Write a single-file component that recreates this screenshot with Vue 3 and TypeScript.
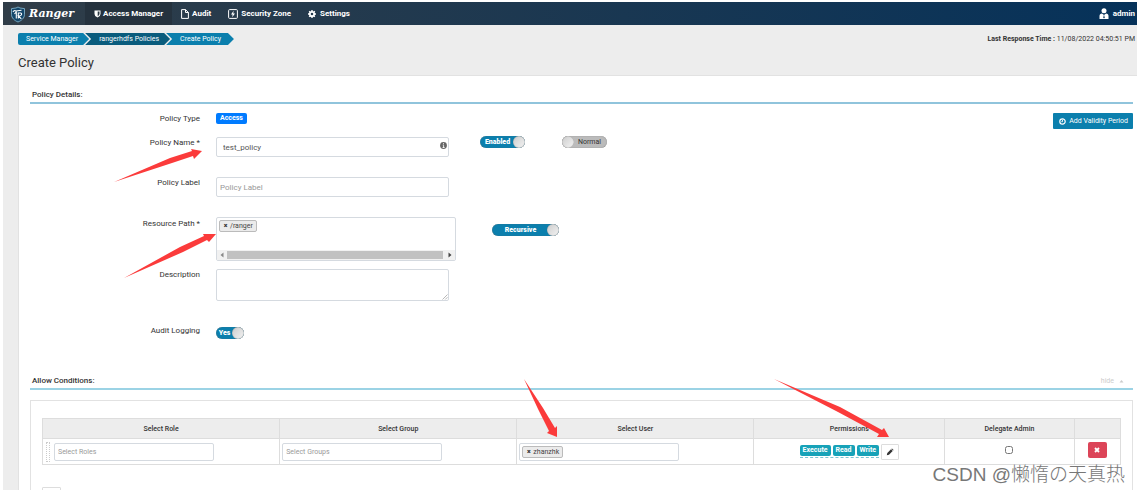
<script setup lang="ts">
import { ref } from 'vue'

interface Permission { name: string }

const policyName = ref('test_policy')
const policyLabel = ref('')
const description = ref('')
const enabled = ref(true)
const normal = ref(false)
const recursive = ref(true)
const audit = ref(true)
const delegateAdmin = ref(false)
const permissions: Permission[] = [{ name: 'Execute' }, { name: 'Read' }, { name: 'Write' }]
const arrows: string[] = [
  '114,182 170,158 192,151 191,149 202,151 194,159 193,156 172,163',
  '124,278 180,247 204,236 203,234 216,234 209,242 207,240 183,252',
  '524,379 543,408 555,428 557,426 557,437 547,433 549,431 538,409',
  '774,379 840,407 882,430 884,428 889,437 877,437 879,434 838,412',
]
</script>

<template>
  <div class="page">
    <header class="topbar">
      <a class="brand" href="#">
        <svg width="16" height="17" viewBox="0 0 16 17" aria-hidden="true">
          <path d="M8 1 10 2 14.500 2.600V8.500C14.500 12 11.500 14.600 8 16 4.500 14.600 1.500 12 1.500 8.500V2.600L6 2Z" fill="#14476b" stroke="#7fb0c8" stroke-width=".9" />
          <path d="M3 6Q4 4 6 5L11.500 4.200M4.500 8 6.500 5.500M6.300 6v6.500M8.300 12.500V7H10.500Q12 7.200 11.500 8.700T8.500 10L11.300 12.800" fill="none" stroke="#fff" stroke-width="1.100" />
        </svg>
        <span>Ranger</span>
      </a>
      <nav>
        <a class="active" href="#">
          <svg width="7" height="8" viewBox="0 0 7 8" aria-hidden="true"><path d="M.5.5h6v3.500Q6.500 6.500 3.500 7.600.5 6.500.5 4Z" fill="#fff" /><path d="M3.700 1.500H5.500V4Q5.300 5.400 3.700 6.300Z" fill="#273540" /></svg>
          Access Manager
        </a>
        <a href="#">
          <svg width="8" height="10" viewBox="0 0 8 10" aria-hidden="true"><path d="M.6.6H4.500L7.400 3.500V9.400H.6ZM4.500.6V3.500H7.400" fill="none" stroke="#fff" /></svg>
          Audit
        </a>
        <a href="#">
          <svg width="10" height="10" viewBox="0 0 10 10" aria-hidden="true"><rect x=".6" y=".6" width="8.800" height="8.800" rx="1" fill="none" stroke="#fff" /><path d="M5.600 1.800 3 5.500H4.600L4.200 8.300 7 4.500H5.300Z" fill="#fff" /></svg>
          Security Zone
        </a>
        <a href="#" class="settings">
          <svg width="8" height="8" viewBox="0 0 8 8" aria-hidden="true"><circle cx="4" cy="4" r="2.200" fill="none" stroke="#fff" stroke-width="1.800" /><path d="M4 0V1.500M4 6.500V8M0 4H1.500M6.500 4H8M1.200 1.200 2 2M6 6 6.800 6.800M1.200 6.800 2 6M6 2 6.800 1.200" stroke="#fff" stroke-width="1.400" /></svg>
          Settings
        </a>
      </nav>
      <a class="user" href="#">
        <svg width="10" height="11" viewBox="0 0 10 11" aria-hidden="true"><circle cx="5" cy="2.700" r="2.500" fill="#fff" /><path d="M.5 11V8Q.5 5.500 3 5.500L5 7 7 5.500Q9.500 5.500 9.500 8V11Z" fill="#fff" /><path d="M5 6.500 4.300 9.500 5 10.500 5.700 9.500Z" fill="#0a3358" /></svg>
        admin
      </a>
    </header>

    <div class="subbar">
      <nav class="crumbs" aria-label="Breadcrumb">
        <a href="#">Service Manager</a>
        <a href="#" class="dark">rangerhdfs Policies</a>
        <a href="#" class="last">Create Policy</a>
      </nav>
      <p class="time"><b>Last Response Time :</b> 11/08/2022 04:50:51 PM</p>
    </div>
    <h1>Create Policy</h1>

    <main>
      <h2>Policy Details:</h2>
      <form class="details" @submit.prevent>
        <div class="fields">
          <div class="row type"><span class="label">Policy Type</span><span class="access">Access</span></div>
          <div class="row name">
            <label class="label" for="name">Policy Name *</label>
            <div class="box">
              <input id="name" v-model="policyName" type="text">
              <svg class="info" width="7" height="7" viewBox="0 0 7 7" aria-hidden="true"><circle cx="3.500" cy="3.500" r="3.400" fill="#666" /><path d="M3.500 1.200v1.100M2.700 3.200h.9v2.200M2.600 5.500h2" stroke="#fff" stroke-width=".9" /></svg>
            </div>
            <label class="switch enabled"><input v-model="enabled" type="checkbox"><span>Enabled</span></label>
            <label class="switch normal"><input v-model="normal" type="checkbox"><span>Normal</span></label>
          </div>
          <div class="row plabel">
            <label class="label" for="plabel">Policy Label</label>
            <div class="box"><input id="plabel" v-model="policyLabel" type="text" placeholder="Policy Label"></div>
          </div>
          <div class="row resource">
            <span class="label">Resource Path *</span>
            <div class="paths">
              <span class="tag"><button type="button" aria-label="Remove /ranger">×</button>/ranger</span>
              <div class="scroll">
                <svg width="4" height="6" viewBox="0 0 4 6" aria-hidden="true"><path d="M3.500.5v5L.5 3Z" fill="#888" /></svg>
                <i></i>
                <svg width="4" height="6" viewBox="0 0 4 6" aria-hidden="true"><path d="M.5.5v5L3.500 3Z" fill="#444" /></svg>
              </div>
            </div>
            <label class="switch recursive"><input v-model="recursive" type="checkbox"><span>Recursive</span></label>
          </div>
          <div class="row desc">
            <label class="label" for="desc">Description</label>
            <div class="box">
              <textarea id="desc" v-model="description"></textarea>
              <svg class="grab" width="6" height="6" viewBox="0 0 6 6" aria-hidden="true"><path d="M.5 5.500 5.500.5M3.200 5.500 5.500 3.200" stroke="#999" stroke-width=".7" /></svg>
            </div>
          </div>
          <div class="row">
            <span class="label">Audit Logging</span>
            <label class="switch yes"><input v-model="audit" type="checkbox"><span>Yes</span></label>
          </div>
        </div>
        <button class="validity" type="button">
          <svg width="7" height="7" viewBox="0 0 7 7" aria-hidden="true"><circle cx="3.500" cy="3.500" r="2.700" fill="none" stroke="#fff" stroke-width="1.200" /><path d="M3.500 1.800V3.700H2.300" fill="none" stroke="#fff" stroke-width=".9" /></svg>
          Add Validity Period
        </button>
      </form>

      <h2 class="allow">Allow Conditions: <a href="#">hide <svg width="5" height="4" viewBox="0 0 5 4" aria-hidden="true"><path d="M.5 3.500 2.500 1 4.500 3.500Z" fill="#ccc" /></svg></a></h2>
      <section class="conditions">
        <table>
          <colgroup><col class="c1"><col class="c2"><col class="c2"><col class="c4"><col class="c5"><col class="c6"></colgroup>
          <thead>
            <tr><th>Select Role</th><th>Select Group</th><th>Select User</th><th>Permissions</th><th>Delegate Admin</th><th></th></tr>
          </thead>
          <tbody>
            <tr>
              <td><div class="cell"><i class="grip"></i><input type="text" placeholder="Select Roles" aria-label="Select Roles"></div></td>
              <td><div class="cell"><input type="text" placeholder="Select Groups" aria-label="Select Groups"></div></td>
              <td><div class="cell"><div class="users"><span class="tag"><button type="button" aria-label="Remove zhanzhk">×</button>zhanzhk</span></div></div></td>
              <td>
                <div class="perms">
                  <div class="badges"><span v-for="p in permissions" :key="p.name">{{ p.name }}</span></div>
                  <button type="button" aria-label="Edit permissions"><svg width="8" height="8" viewBox="0 0 8 8" aria-hidden="true"><path d="M.8 7.200 1.300 5 5 1.300 6.700 3 3 6.700ZM5.400.9 6 .4 7.600 2 7.100 2.600Z" fill="#333" /></svg></button>
                </div>
              </td>
              <td class="mid"><input v-model="delegateAdmin" type="checkbox" aria-label="Delegate Admin"></td>
              <td class="mid"><button class="remove" type="button" aria-label="Remove row"><svg width="6" height="6" viewBox="0 0 6 6" aria-hidden="true"><path d="M1 1 5 5M5 1 1 5" stroke="#fff" stroke-width="1.800" /></svg></button></td>
            </tr>
          </tbody>
        </table>
        <button class="add" type="button" aria-label="Add row"></button>
      </section>
    </main>

    <svg class="arrows" width="1140" height="494" viewBox="0 0 1140 494" aria-hidden="true">
      <polygon v-for="a in arrows" :key="a" :points="a" fill="#fb3b3b" />
    </svg>
    <div class="watermark">CSDN @懒惰の天真热</div>
  </div>
</template>

<style>
body { margin: 0; background: #fff; }
</style>

<style scoped>
.page { position: relative; height: 100vh; box-sizing: border-box; padding: 2px 3px 4px; overflow: hidden; display: flex; flex-direction: column; font: 8px/12px Roboto, "Liberation Sans", sans-serif; color: #333; background: #ededed content-box; }
.page *, .page *::before { box-sizing: border-box; }
a { color: inherit; text-decoration: none; }
svg { display: block; flex: none; }
button { font: inherit; cursor: pointer; }
h1, h2, p { margin: 0; }
input, textarea { font: inherit; color: #555; }
::placeholder { color: #999; opacity: 1; }

.topbar { flex: none; height: 23px; display: flex; align-items: stretch; color: #fff; font-weight: 700; background: linear-gradient(90deg, #303d48, #06325a); }
.brand { width: 82px; padding: 1px 0 0 7px; display: flex; align-items: center; gap: 3px; font: italic 700 13px/20px "Liberation Serif", serif; }
.brand { font-family: "DejaVu Serif", "Liberation Serif", serif; font-size: 11px; }
.topbar nav { display: flex; }
.topbar nav a { display: flex; align-items: center; gap: 3px; padding: 0 8px 0 9px; }
.topbar nav a.active { gap: 2px; padding-right: 9px; background: #25323e; }
.topbar nav a.settings { gap: 4px; }
.user { margin-left: auto; padding-right: 2px; display: flex; align-items: center; gap: 4px; }

.subbar { flex: none; display: flex; justify-content: space-between; align-items: flex-start; padding: 8px 2px 0 15px; }
.crumbs { display: flex; color: #fff; font-size: 7px; }
.crumbs a { height: 12px; padding: 0 11px 0 14px; margin-right: -4px; background: #0b7fad; clip-path: polygon(0 0, calc(100% - 6px) 0, 100% 50%, calc(100% - 6px) 100%, 0 100%, 6px 50%); }
.crumbs a:first-child { padding-left: 8px; border-radius: 2px 0 0 2px; clip-path: polygon(0 0, calc(100% - 6px) 0, 100% 50%, calc(100% - 6px) 100%, 0 100%); }
.crumbs .dark { background: #0a5c7d; }
.crumbs .last { padding-right: 13px; }
.time { font-size: 7px; }
.time b { font-weight: 700; }
h1 { flex: none; padding-left: 15px; margin: 10px 0 4px; font-size: 13px; line-height: 16px; font-weight: 400; }

main { flex: 1; min-height: 0; overflow: hidden; margin-left: 15px; padding: 12px 4px 0 11px; background: #fff; border: 1px solid #e2e2e2; border-width: 1px 0 0 1px; }
h2 { font-size: 8px; line-height: 14px; font-weight: 500; padding-left: 2px; border-bottom: 2px solid #90c4dc; }
.details { display: flex; align-items: flex-start; justify-content: space-between; height: 270px; padding-top: 8px; }
.row { display: flex; align-items: flex-start; }
.label { width: 170px; margin-right: 16px; text-align: right; line-height: 14px; }
.type { height: 24px; }
.access { margin-top: 1px; height: 11px; padding: 0 4px; border-radius: 2px; background: #007bff; color: #fff; font-weight: 700; font-size: 7px; line-height: 11px; }
.name { height: 40px; }
.plabel { height: 41px; }
.resource { height: 51px; }
.desc { height: 56px; }
.box { position: relative; width: 233px; margin-top: 1px; }
.box input, .box textarea, .cell input, .users { display: block; width: 100%; height: 20px; padding: 0 3px; border: 1px solid #d5dae0; border-radius: 2px; outline: 0; background: #fff; }
.name .box input { padding-left: 6px; }
.box textarea { height: 32px; resize: none; }
.info { position: absolute; right: 2px; top: 5px; }
.grab { position: absolute; right: 1px; bottom: 1px; }
.switch { position: relative; display: block; height: 12px; border-radius: 6px; background: #0b7fad; color: #fff; font-size: 7px; line-height: 12px; font-weight: 900; cursor: pointer; box-shadow: inset 0 0 1px #666; }
.switch input { position: absolute; inset: 0; width: 100%; height: 100%; margin: 0; opacity: 0; }
.switch span { display: block; padding: 0 13px 0 3px; text-align: center; }
.switch::after { content: ""; position: absolute; right: 0; top: 0; width: 12px; height: 12px; border-radius: 50%; background: linear-gradient(135deg, #ccc, #f4f4f4); box-shadow: inset 0 0 1px #777; }
.enabled { width: 45px; margin-left: 31px; }
.normal { width: 45px; margin-left: 37px; background: #bbb; color: #333; font-weight: 400; }
.normal span { padding: 0 3px 0 13px; }
.normal::after { right: auto; left: 0; }
.recursive { width: 67px; margin: 7px 0 0 36px; }
.yes { width: 28px; margin-top: 3px; }
.yes span { padding-left: 2px; }
.paths { width: 240px; height: 44px; display: flex; flex-direction: column; justify-content: space-between; border: 1px solid #d5dae0; border-radius: 2px; }
.tag { align-self: flex-start; display: inline-flex; align-items: center; height: 12px; margin: 2px 0 0 2px; padding: 0 3px 0 1px; border: 1px solid #bbb; border-radius: 2px; background: #ebebeb; font-size: 7px; line-height: 10px; color: #444; }
.tag button { padding: 0; width: 9px; border: 0; background: none; font-weight: 900; line-height: 10px; color: #333; }
.scroll { display: flex; align-items: center; justify-content: space-between; height: 10px; padding: 0 3px; background: #f1f1f1; }
.scroll i { flex: 1; margin: 0 5px 0 3px; height: 8px; background: #c1c1c1; }
.validity { height: 16px; margin-top: 1px; padding: 0 5px 0 6px; display: flex; align-items: center; gap: 3px; border: 0; border-radius: 1px; background: #0b7fad; color: #fff; font-size: 7px; }

.allow { display: flex; justify-content: space-between; border-color: #9bd3e5; }
.allow a { display: flex; align-items: center; gap: 5px; padding-right: 9px; font-size: 7px; font-weight: 400; color: #ccc; }
.conditions { margin-top: 10px; height: 120px; padding: 17px 11px; border: 1px solid #e2e2e2; }
table { width: 100%; table-layout: fixed; border-collapse: collapse; }
.c1 { width: 22%; } .c2 { width: 22%; } .c4 { width: 17.7%; } .c5 { width: 12%; }
th { height: 20px; padding: 0; border: 1px solid #ddd; background: #ededed; font-weight: 500; font-size: 7px; }
td { height: 26px; padding: 0 2px; border: 1px solid #ddd; }
.cell { display: flex; align-items: center; }
.cell input, .users { width: 160px; height: 18px; font-size: 7px; }
.grip { width: 4px; height: 20px; margin: 0 4px 0 1px; border: 1px dotted #ccc; }
.users { display: flex; padding: 0; }
.perms { display: flex; justify-content: center; align-items: center; gap: 2px; }
.badges { display: flex; gap: 2px; padding-bottom: 1px; border-bottom: 1px dashed #7cc5d2; }
.badges span { height: 11px; padding: 0 3px; border-radius: 2px; background: #17a2b8; color: #fff; font-size: 7px; font-weight: 700; line-height: 11px; }
.perms button { width: 18px; height: 16px; padding: 0 4px; border: 1px solid #ddd; border-radius: 1px; background: #fff; }
.mid { text-align: center; }
.mid input { width: 8px; height: 8px; margin: 0; }
.remove { width: 19px; height: 16px; padding: 0; border: 0; border-radius: 2px; background: #dc4458; }
.remove svg { margin: auto; }
.add { display: block; margin-top: 22px; width: 19px; height: 16px; padding: 0; border: 1px solid #ddd; border-radius: 1px; background: #fff; }
.arrows { position: absolute; left: 0; top: 0; pointer-events: none; }
.watermark { position: absolute; right: 15px; bottom: 7px; font: 300 19px/24px "Liberation Sans", "Noto Sans CJK SC", sans-serif; color: #777; white-space: nowrap; }
</style>
